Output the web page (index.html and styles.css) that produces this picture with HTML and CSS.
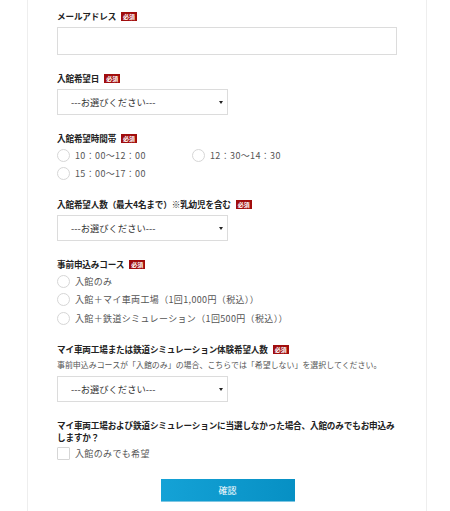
FILE: index.html
```html
<!DOCTYPE html>
<html lang="ja">
<head>
  <meta charset="UTF-8" />
  <meta name="viewport" content="width=device-width, initial-scale=1.0"/>
  <title>入館申込み</title>
  <link rel="stylesheet" href="styles.css">
</head>
<body>
  <div class="container">
    <form id="entryForm">
      <div class="field">
        <label class="field-label" for="email">メールアドレス<span class="req">必須</span></label>
        <input type="email" id="email" class="text-input" />
      </div>

      <div class="field">
        <label class="field-label" for="date">入館希望日<span class="req">必須</span></label>
        <div class="select-wrap">
          <select id="date">
            <option>---お選びください---</option>
          </select>
        </div>
      </div>

      <div class="field field-choice">
        <p class="field-label">入館希望時間帯<span class="req">必須</span></p>
        <div class="time-grid">
          <label class="choice"><input type="radio" name="time" /><span class="mark round"></span>10：00〜12：00</label>
          <label class="choice"><input type="radio" name="time" /><span class="mark round"></span>12：30〜14：30</label>
          <label class="choice"><input type="radio" name="time" /><span class="mark round"></span>15：00〜17：00</label>
        </div>
      </div>

      <div class="field">
        <label class="field-label" for="people">入館希望人数（最大4名まで）※乳幼児を含む<span class="req">必須</span></label>
        <div class="select-wrap">
          <select id="people">
            <option>---お選びください---</option>
          </select>
        </div>
      </div>

      <div class="field field-choice">
        <p class="field-label">事前申込みコース<span class="req">必須</span></p>
        <label class="choice"><input type="radio" name="course" /><span class="mark round"></span>入館のみ</label>
        <label class="choice"><input type="radio" name="course" /><span class="mark round"></span>入館＋マイ車両工場（1回1,000円（税込））</label>
        <label class="choice"><input type="radio" name="course" /><span class="mark round"></span>入館＋鉄道シミュレーション（1回500円（税込））</label>
      </div>

      <div class="field">
        <label class="field-label" for="extra">マイ車両工場または鉄道シミュレーション体験希望人数<span class="req">必須</span></label>
        <p class="note">事前申込みコースが「入館のみ」の場合、こちらでは「希望しない」を選択してください。</p>
        <div class="select-wrap">
          <select id="extra">
            <option>---お選びください---</option>
          </select>
        </div>
      </div>

      <div class="field field-choice">
        <p class="field-label">マイ車両工場および鉄道シミュレーションに当選しなかった場合、入館のみでもお申込みしますか？</p>
        <label class="choice"><input type="checkbox" name="fallback" /><span class="mark square"></span>入館のみでも希望</label>
      </div>

      <div class="submit-row">
        <button type="submit" class="submit-btn">確認</button>
      </div>
    </form>
  </div>
</body>
</html>
```

FILE: styles.css
```css
body {
  margin: 0;
  background: #fff;
  font-family: "Noto Sans CJK JP", "Noto Sans", sans-serif;
  color: #333;
}
.container {
  width: 340px;
  margin-left: 27px;
  padding: 10px 29px 9px;
  border-left: 1px solid #eee;
  border-right: 1px solid #eee;
}
.field {
  margin-bottom: 17px;
}
.field-choice {
  margin-bottom: 15px;
}
.field-label {
  display: block;
  margin: 0 0 5px;
  font-size: 8.6px;
  letter-spacing: -0.15px;
  line-height: 12px;
  font-weight: bold;
  color: #222;
}
.field-choice .field-label {
  margin-bottom: 2px;
}
.req {
  display: inline-block;
  margin-left: 5px;
  padding: 0 2px;
  height: 9px;
  line-height: 9px;
  font-size: 6px;
  letter-spacing: 0;
  font-weight: bold;
  color: #fff;
  background: #a10d0d;
  vertical-align: 1px;
}
.text-input {
  display: block;
  width: 100%;
  height: 28px;
  box-sizing: border-box;
  border: 1px solid #dcdcdc;
  background: #fff;
  margin: 0;
}
.select-wrap {
  position: relative;
  width: 171px;
}
.select-wrap select {
  display: block;
  width: 100%;
  height: 26px;
  box-sizing: border-box;
  margin: 0;
  padding: 0 0 0 13px;
  border: 1px solid #dcdcdc;
  background: #fff;
  font-family: inherit;
  font-size: 9.3px;
  color: #333;
  -webkit-appearance: none;
  appearance: none;
}
.select-wrap::after {
  content: "";
  position: absolute;
  right: 5px;
  top: 12px;
  border-left: 2px solid transparent;
  border-right: 2px solid transparent;
  border-top: 3px solid #222;
}
.time-grid {
  display: grid;
  grid-template-columns: 135px auto;
}
.choice {
  display: flex;
  align-items: center;
  height: 18.5px;
  font-size: 9px;
  letter-spacing: 0.35px;
  color: #555;
}
.choice input {
  display: none;
}
.mark {
  width: 11px;
  height: 11px;
  margin-right: 5px;
  border: 1px solid #d6d6d6;
  background: #fff;
  flex-shrink: 0;
}
.round {
  border-radius: 50%;
}
.square {
  border-radius: 1px;
}
.note {
  margin: -1px 0 5px;
  font-size: 7.95px;
  line-height: 12px;
  color: #555;
}
.submit-row {
  display: flex;
  justify-content: center;
  padding-top: 1px;
}
.submit-btn {
  width: 134px;
  height: 23px;
  margin-left: 1px;
  border: none;
  border-bottom: 1px solid #7fc6e2;
  background: linear-gradient(to right, #14a2d6, #0790c4);
  color: #fff;
  font-family: inherit;
  font-size: 9px;
  padding: 0;
}
```
